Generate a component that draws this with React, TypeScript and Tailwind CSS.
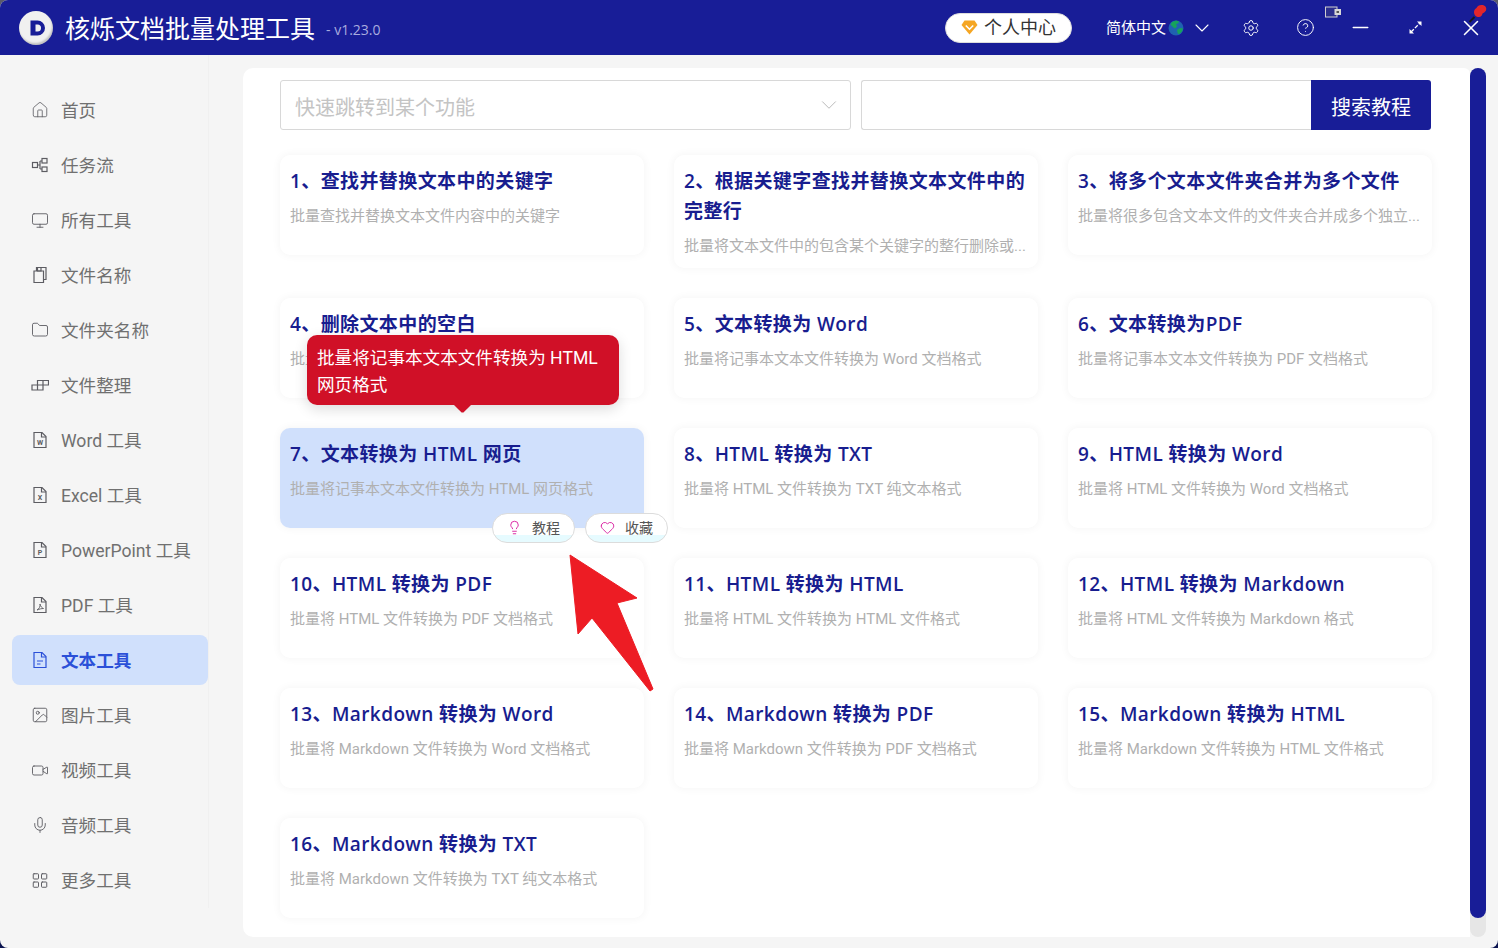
import { ChevronDown, Settings, CircleHelp, Minus, X, Lightbulb, Heart, Folder, Monitor, Image, Video, Mic, LayoutGrid, House } from "lucide-react";
import type { ReactNode } from "react";

const font = "font-['Open_Sans','Noto_Sans_CJK_SC',sans-serif]";
const thinFont = "font-['Roboto','Noto_Sans_CJK_SC',sans-serif]";

function DocIcon({ letter, children }: { letter?: string; children?: ReactNode }) {
  return (
    <svg width="18" height="18" viewBox="0 0 18 18" fill="none" stroke="currentColor" strokeWidth="1.2">
      <path d="M3 1.500h8l4 4v11H3z" />
      <path d="M10.500 1.500v4.500h4.500" />
      {letter && (
        <text x="9" y="13.500" fontSize="7" fontWeight="700" textAnchor="middle" fill="currentColor" stroke="none">
          {letter}
        </text>
      )}
      {children}
    </svg>
  );
}

function FlowIcon() {
  return (
    <svg width="18" height="18" viewBox="0 0 18 18" fill="none" stroke="currentColor" strokeWidth="1.2">
      <rect x="1.500" y="6.500" width="5" height="5" />
      <rect x="11" y="2.500" width="5" height="4.500" />
      <rect x="11" y="11" width="5" height="4.500" />
      <path d="M6.500 9h2.500M9 5h2M9 13h2M9 5v8" />
    </svg>
  );
}

function FilesIcon() {
  return (
    <svg width="18" height="18" viewBox="0 0 18 18" fill="none" stroke="currentColor" strokeWidth="1.2">
      <path d="M3 5h9.500v11.500H3z" />
      <path d="M5.500 5V1.500h9.500v12h-2.500" />
      <path d="M6.500 1.500v3.500h3.500V1.500" />
    </svg>
  );
}

function BlocksIcon() {
  return (
    <svg width="18" height="18" viewBox="0 0 18 18" fill="none" stroke="currentColor" strokeWidth="1.2">
      <path d="M1 9h5.500v5H1zM6.500 9H12v5H6.500zM6.500 9V4.500H12V9M12 4.500h5.500V9H12" />
    </svg>
  );
}

const menu: { label: string; icon: ReactNode; active?: boolean }[] = [
  { label: "首页", icon: <House size={22} strokeWidth={1.1} /> },
  { label: "任务流", icon: <FlowIcon /> },
  { label: "所有工具", icon: <Monitor size={21} strokeWidth={1.2} /> },
  { label: "文件名称", icon: <FilesIcon /> },
  { label: "文件夹名称", icon: <Folder size={20} strokeWidth={1.2} /> },
  { label: "文件整理", icon: <BlocksIcon /> },
  { label: "Word 工具", icon: <DocIcon letter="W" /> },
  { label: "Excel 工具", icon: <DocIcon letter="X" /> },
  { label: "PowerPoint 工具", icon: <DocIcon letter="P" /> },
  { label: "PDF 工具", icon: <DocIcon><path d="M6 14c2-1 3.500-3.500 3-6 .5 2.500 2 4 3.500 4.500-2 0-4 .5-6.500 1.500z" strokeWidth="0.9" /></DocIcon> },
  { label: "文本工具", active: true, icon: <DocIcon><path d="M6 10h6M6 13h3.500" /></DocIcon> },
  { label: "图片工具", icon: <Image size={20} strokeWidth={1.2} /> },
  { label: "视频工具", icon: <Video size={21} strokeWidth={1.2} /> },
  { label: "音频工具", icon: <Mic size={22} strokeWidth={1.2} /> },
  { label: "更多工具", icon: <LayoutGrid size={19} strokeWidth={1.3} /> },
];

const cards = [
  ["1、", "查找并替换文本中的关键字", "批量查找并替换文本文件内容中的关键字"],
  ["2、", "根据关键字查找并替换文本文件中的完整行", "批量将文本文件中的包含某个关键字的整行删除或..."],
  ["3、", "将多个文本文件夹合并为多个文件", "批量将很多包含文本文件的文件夹合并成多个独立..."],
  ["4、", "删除文本中的空白", "批量删除文本文件中的空白内容"],
  ["5、", "文本转换为 Word", "批量将记事本文本文件转换为 Word 文档格式"],
  ["6、", "文本转换为PDF", "批量将记事本文本文件转换为 PDF 文档格式"],
  ["7、", "文本转换为 HTML 网页", "批量将记事本文本文件转换为 HTML 网页格式"],
  ["8、", "HTML 转换为 TXT", "批量将 HTML 文件转换为 TXT 纯文本格式"],
  ["9、", "HTML 转换为 Word", "批量将 HTML 文件转换为 Word 文档格式"],
  ["10、", "HTML 转换为 PDF", "批量将 HTML 文件转换为 PDF 文档格式"],
  ["11、", "HTML 转换为 HTML", "批量将 HTML 文件转换为 HTML 文件格式"],
  ["12、", "HTML 转换为 Markdown", "批量将 HTML 文件转换为 Markdown 格式"],
  ["13、", "Markdown 转换为 Word", "批量将 Markdown 文件转换为 Word 文档格式"],
  ["14、", "Markdown 转换为 PDF", "批量将 Markdown 文件转换为 PDF 文档格式"],
  ["15、", "Markdown 转换为 HTML", "批量将 Markdown 文件转换为 HTML 文件格式"],
  ["16、", "Markdown 转换为 TXT", "批量将 Markdown 文件转换为 TXT 纯文本格式"],
];

function PillButton({ label, icon }: { label: string; icon: ReactNode }) {
  return (
    <div className="flex h-[30px] w-[83px] items-center justify-center gap-[10px] rounded-full border border-[#dcdcdc] bg-[linear-gradient(#ffffff_0%,#ffffff_75%,#e6fbff_75%,#e6fbff_100%)] pb-[2px] text-[14px] text-[#555555]">
      {icon}
      <span>{label}</span>
    </div>
  );
}

function Card({ num, title, desc, index }: { num: string; title: string; desc: string; index: number }) {
  const hovered = index === 6;
  return (
    <div
      className={`relative rounded-[10px] px-[10px] pt-[11px] shadow-[0_0_10px_rgba(0,0,0,0.05)] ${
        hovered ? "bg-[#d0e0fc]" : "bg-white"
      } ${index === 1 ? "h-[113px]" : "h-[100px]"}`}
    >
      <div className="text-[19px] leading-[30px] font-semibold tracking-[0.4px] text-[#181d8f]">
        <span>{num}</span>
        {title}
      </div>
      <div className={`mt-[8px] text-[15px] leading-[24px] whitespace-nowrap text-[#b0b0b0] ${thinFont}`}>{desc}</div>
      {hovered && (
        <div className="absolute top-[85px] left-[212px] z-10 flex gap-[10px]">
          <PillButton label="教程" icon={<Lightbulb size={15} strokeWidth={1.4} className="text-[#d6129a]" />} />
          <PillButton label="收藏" icon={<Heart size={15} strokeWidth={1.4} className="text-[#d6129a]" />} />
        </div>
      )}
      {hovered && (
        <div className={`absolute top-[-93px] left-[27px] z-10 h-[70px] w-[312px] rounded-[10px] bg-[#d01027] px-[10px] pt-[10px] text-[17.600px] leading-[27px] text-white shadow-[0_4px_14px_rgba(0,0,0,0.14)] ${thinFont}`}>
          批量将记事本文本文件转换为 HTML 网页格式
          <div className="absolute top-[69px] left-[146px] h-[9px] w-[19px] bg-[#d01027] [clip-path:polygon(0_0,100%_0,55%_95%,45%_95%)]" />
        </div>
      )}
    </div>
  );
}

export default function App() {
  return (
    <div className="h-[948px] w-[1498px] overflow-hidden bg-[linear-gradient(#5a5a6a_0%,#5a5a6a_50%,#0b1450_50%,#0b1450_100%)]">
      <div className={`relative flex h-[948px] w-[1498px] flex-col overflow-hidden rounded-[8px] bg-[#f5f5f5] ${font}`}>
        <header className="flex h-[55px] shrink-0 items-center bg-[#181d97] pl-[19px] text-white">
          <div className="flex h-[34px] w-[34px] items-center justify-center rounded-full bg-[#f0f0f0] shadow-[inset_-1px_-2px_2px_rgba(0,0,0,0.2)]">
            <svg width="20" height="20" viewBox="0 0 20 20">
              <path d="M4.500 2.500h7a7.500 7.500 0 0 1 0 15h-7z" fill="#181d97" />
              <path d="M9.500 6.500h2a3.500 3.500 0 0 1 0 7h-2z" fill="#f0f0f0" />
            </svg>
          </div>
          <div className="ml-[12px] text-[25px] leading-[34px]">核烁文档批量处理工具</div>
          <div className="mt-[3px] ml-[11px] text-[14px] text-[#a9acdf]">- v1.23.0</div>
          <div className="ml-auto flex h-[30px] w-[127px] items-center justify-center gap-[6px] rounded-full border border-[#dddddd] bg-white text-[18px] text-[#333333]">
            <svg width="17" height="15" viewBox="0 0 17 15">
              <path d="M3.500 0.500h10l3 4.500-8 9.500-8-9.500z" fill="#f5a623" />
              <path d="M4.800 5.500l3.700 3.700 3.700-3.700" fill="none" stroke="#ffffff" strokeWidth="1.600" />
            </svg>
            个人中心
          </div>
          <div className="ml-[34px] flex items-center text-[15px]">
            简体中文
            <svg width="16" height="16" viewBox="0 0 16 16" className="ml-[2px]">
              <circle cx="8" cy="8" r="7.500" fill="#1f62b0" />
              <path d="M4 2l4-1.500 3 1-1 2-2 .5 1 2.500-2 2-1.500-1-3-3zM9 10l3-2 3 .5-1 3-3 3-1.500-1.500z" fill="#16a35a" />
            </svg>
          </div>
          <ChevronDown size={24} strokeWidth={1.1} className="ml-[6px]" />
          <div className="ml-[9px] flex w-[55px] justify-center"><Settings size={18} strokeWidth={1.3} /></div>
          <div className="flex w-[55px] justify-center"><CircleHelp size={19} strokeWidth={1.2} /></div>
          <div className="flex w-[55px] justify-center"><Minus size={25} strokeWidth={1.3} /></div>
          <div className="flex w-[55px] justify-center">
            <svg width="15" height="15" viewBox="0 0 15 15" fill="#ffffff" stroke="#ffffff">
              <path d="M3 12l9-9" strokeWidth="1.300" strokeDasharray="4 1.500" />
              <path d="M9 1.500h4.500V6zM1.500 9V13.500H6z" stroke="none" />
            </svg>
          </div>
          <div className="flex w-[55px] justify-center"><X size={26} strokeWidth={1.4} /></div>
        </header>

        {/* small status marks over the title bar */}
        <svg width="17" height="12" viewBox="0 0 17 12" className="absolute top-[6px] left-[1325px]">
          <rect x="0.500" y="1" width="11.500" height="10" fill="#2c2f8e" stroke="#d0d0d0" />
          <rect x="9.500" y="3" width="6.500" height="6" fill="#d8d8d8" />
          <rect x="11.500" y="5" width="2.500" height="2" fill="#555555" />
        </svg>
        <svg width="20" height="20" viewBox="0 0 20 20" className="absolute top-[3px] left-[1468px]">
          <path d="M1.500 19l5-5" stroke="#1a1a1a" strokeWidth="2" />
          <path d="M6 9c0-2 1-3 2.500-4C9.500 2.500 12 1.500 14.500 2c3 .5 4.500 3 3.500 5.500-1 1.500-2.500 2.500-3.500 3-.5 2-1.500 3.500-3.500 3.500-3 0-5-2-5-5z" fill="#e3262b" />
        </svg>

        <div className="flex min-h-0 flex-1">
          <aside className="h-[853px] w-[209px] shrink-0 border-r border-[#f0f0f0] pt-[30px] pl-[12px]">
            <nav className="flex flex-col gap-[5px]">
              {menu.map((m) => (
                <div
                  key={m.label}
                  className={`flex h-[50px] w-[196px] items-center gap-[12px] rounded-[8px] pl-[19px] text-[17.600px] ${thinFont} ${
                    m.active ? "bg-[#d0e0fc] font-bold text-[#2b50d8]" : "text-[#707070]"
                  }`}
                >
                  <span className={`flex w-[18px] justify-center ${m.active ? "text-[#2b50d8]" : "text-[#5c5c62]"}`}>{m.icon}</span>
                  <span className="mt-[2px]">{m.label}</span>
                </div>
              ))}
            </nav>
          </aside>

          <div className="mt-[13px] ml-[34px] h-[869px] w-[1227px] rounded-tl-[10px] rounded-tr-[6px] rounded-bl-[10px] bg-white pt-[12px] pl-[37px]">
            <div className="flex h-[50px] w-[1151px]">
              <div className="flex w-[571px] items-center justify-between rounded-[3px] border border-[#d8d8d8] pr-[8px] pl-[14px] text-[20px] text-[#c4c4c4]">
                <span className="pt-[6px]">快速跳转到某个功能</span>
                <ChevronDown size={26} strokeWidth={0.9} className="text-[#b8b8b8]" />
              </div>
              <div className="ml-[10px] flex-1 rounded-l-[3px] border-y border-l border-[#d8d8d8]" />
              <div className="flex w-[120px] items-center justify-center rounded-r-[3px] bg-[#181d97] pt-[6px] text-[20px] text-white">搜索教程</div>
            </div>
            <div className="mt-[25px] grid w-[1152px] grid-cols-[364px_364px_364px] items-start gap-x-[30px] gap-y-[30px]">
              {cards.map((c, i) => (
                <Card key={c[0]} num={c[0]} title={c[1]} desc={c[2]} index={i} />
              ))}
            </div>
          </div>

          <div className="mt-[13px] h-[869px] w-[16px] rounded-full bg-[#e6e6e6]">
            <div className="h-[850px] rounded-full bg-[#181d97]" />
          </div>
        </div>

        {/* callout arrow drawn over the page */}
        <svg width="100" height="150" viewBox="0 0 100 150" className="absolute top-[550px] left-[565px] z-20">
          <path d="M5 5L72 48 52 53 88 139 85 141 27 68 13 84z" fill="#ed1c24" stroke="#ed1c24" strokeWidth="1" strokeLinejoin="round" />
        </svg>
      </div>
    </div>
  );
}
